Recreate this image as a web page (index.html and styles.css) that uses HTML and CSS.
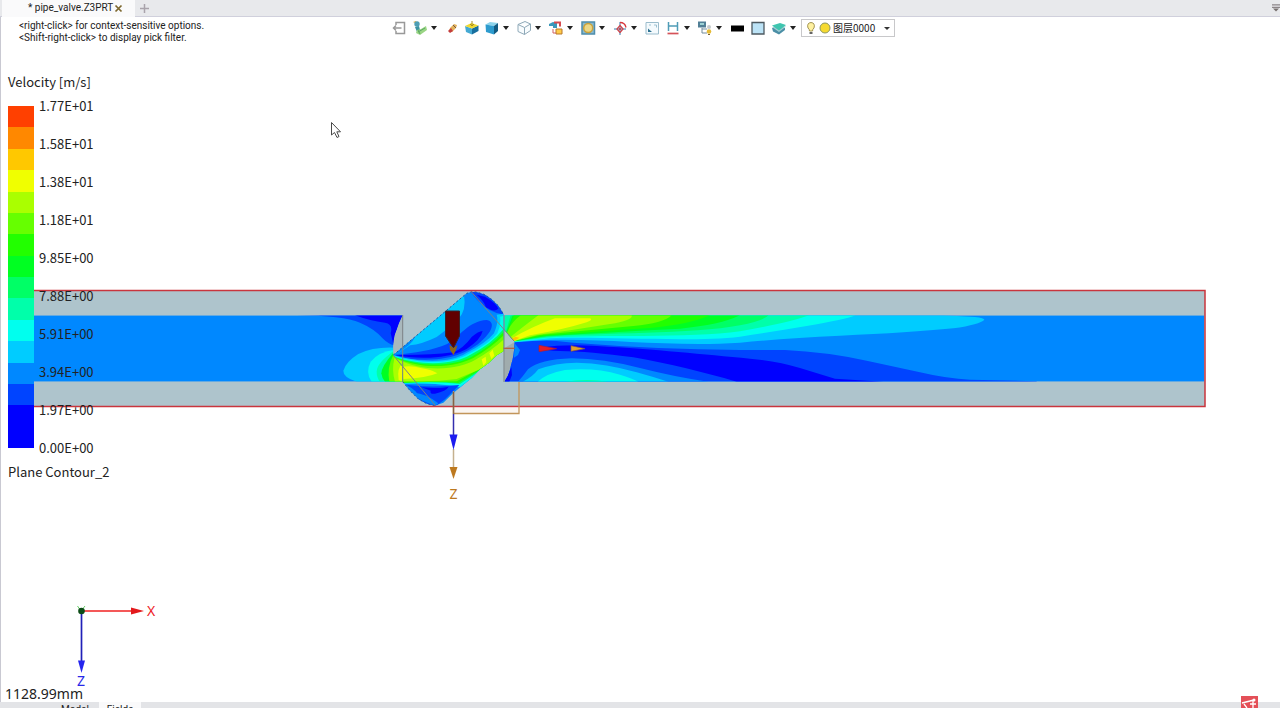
FILE: index.html
```html
<!DOCTYPE html>
<html lang="en">
<head>
<meta charset="utf-8">
<title>pipe_valve.Z3PRT</title>
<link rel="stylesheet" href="styles.css">
</head>
<body>
<header class="tabbar">
  <div class="tab">
    <span>* pipe_valve.Z3PRT</span>
    <button class="plain" aria-label="Close tab"><svg width="9" height="9" viewBox="0 0 9 9"><path d="M1.500 1.500l6 6M7.500 1.500l-6 6" stroke="#7d682f" stroke-width="1.700"/></svg></button>
  </div>
  <button class="plain new-tab" aria-label="New tab"><svg width="9" height="9" viewBox="0 0 9 9"><path d="M4.500 0v9M0 4.500h9" stroke="#a9a3ab" stroke-width="1.500"/></svg></button>
  <button class="plain tab-list" aria-label="Tab list"><svg width="8" height="8" viewBox="0 0 8 8"><path d="M0 .8h8M0 3.300h8" stroke="#8b8588" stroke-width="1.300"/><path d="M1 4.500h6l-3 3z" fill="#77706f"/></svg></button>
</header>

<main class="viewport">
  <svg class="scene" viewBox="0 17 1280 685" aria-label="Velocity contour on the valve section plane">
    <defs>
      <clipPath id="left"><path d="M-888 106H218Q207 128 200 150Q188 175 190 225L218 262V305H-888Z"/></clipPath>
      <clipPath id="ball"><path d="M190 225L345 95L410 40L425 35L440 36L465 44L485 58L505 77L521 103V213L500 226L475 250L450 268L425 294L400 314L370 339L340 368L315 377L290 371L265 357L240 332L218 305V258Z"/></clipPath>
      <clipPath id="right"><path d="M43 106H2142V305H43Q58 285 63 255Q72 230 74 186L43 149Z"/></clipPath>
    </defs>
    <rect x="34" y="291" width="1171" height="116" fill="#aec4cc"/>
    <g transform="translate(330 280) scale(.33333)">
      <g clip-path="url(#left)">
        <path fill="#0088ff" d="M-888 106H218V305H-888Z"/>
        <path fill="#0044ff" d="M-100 106Q40 107 90 128Q135 147 160 177Q175 192 192 196L225 106Z"/>
        <path fill="#0000ff" d="M75 106Q120 123 165 128Q190 132 182 160L190 192L225 106Z"/>
        <path fill="#00ccff" d="M195 203Q130 200 85 222Q48 245 40 272Q39 292 80 305H218V225Z"/>
        <path fill="#00ffee" d="M195 209Q145 215 122 245Q105 278 125 305H218V225Z"/>
        <path fill="#00ffaa" d="M190 214Q140 250 140 275Q140 293 150 305H218V225Z"/>
        <path fill="#00ff22" d="M190 218Q154 260 154 280Q156 296 165 305H218V225Z"/>
        <path fill="#66ff00" d="M190 225Q170 262 178 305H218V225Z"/>
        <path fill="#aaff00" d="M194 232Q184 270 195 305H218V235Z"/>
        <path fill="#f0ff00" d="M218 250Q200 265 206 300L218 305Z"/>
      </g>
      <path fill="#a9b8bc" d="M218 106Q207 128 200 150Q188 175 190 222L218 200Z"/>
      <g clip-path="url(#ball)">
        <path fill="#0088ff" d="M180 30H530V380H180Z"/>
        <path fill="#00ccff" d="M190 225L345 90L402 45Q410 90 385 118Q350 150 320 171Q275 193 240 196L205 220Z"/>
        <path fill="#0088ff" d="M190 225L258 166Q250 184 236 196L205 220Z"/>
        <path fill="#0044ff" d="M190 225Q290 218 350 193C390 170 415 123 470 120Q495 125 480 154C450 200 390 232 320 238Q240 243 190 225Z"/>
        <path fill="#0000ff" d="M198 225Q300 226 370 217Q400 205 425 171Q445 153 458 153Q453 178 410 207Q370 230 300 233Q240 235 198 225Z"/>
        <path fill="#0044ff" d="M422 35L470 40L530 105L500 99Q460 88 422 35Z"/>
        <path fill="#0000ff" d="M440 44L465 50Q500 70 505 86Q492 98 468 82Q463 64 440 44Z"/>
        <path fill="#00ccff" d="M190 225C290 254 370 244 408 220Q470 188 492 160Q507 125 500 104L530 100V225L400 325Q330 306 218 312Z"/>
        <path fill="#00ffee" d="M190 227C290 259 375 246 415 222Q480 190 502 160Q514 135 510 110L530 105V220L390 320Q320 307 218 310Z"/>
        <path fill="#00ff66" d="M190 229C290 264 380 249 420 225Q490 190 530 135V220L390 312Q320 303 218 309Z"/>
        <path fill="#22ff00" d="M190 230C290 269 385 253 425 230Q490 195 530 145V222L385 309Q320 302 218 309Z"/>
        <path fill="#66ff00" d="M190 231C290 276 385 257 430 234Q490 200 530 157V222L380 304Q310 305 218 306Z"/>
        <path fill="#aaff00" d="M200 237C290 282 390 266 435 240Q490 208 530 170V220L445 270L380 297Q300 308 218 302Z"/>
        <path fill="#f0ff00" d="M214 262Q240 255 275 265Q302 268 322 280Q290 294 220 297ZM455 238l12 -8 2 17 -9 10zM478 220l10-11 5 18-9 10z"/>
        <path fill="#0044ff" d="M228 314Q300 324 388 315L345 358L315 380L265 360Q275 339 228 314Z"/>
        <path fill="#0088ff" d="M252 338Q288 340 325 370L315 378L265 357Z"/>
        <path fill="#0000ff" d="M275 322Q330 327 356 320Q349 333 315 341Q298 343 302 332Z"/>
      </g>
      <path d="M190 225L345 95L410 40L425 35L440 36L465 44L485 58L505 77L521 103M218 305L240 332L265 357L290 371L315 377" fill="none" stroke="#285c9c" stroke-width="3" stroke-dasharray="6 7"/>
    </g>
    <g transform="translate(490 280) scale(.33333)">
      <path fill="#a0acad" d="M43 205L74 186Q73 240 62 256Q57 285 43 305Z"/>
      <g clip-path="url(#right)">
        <path fill="#0088ff" d="M43 106H2142V305H43Z"/>
        <path fill="#0044ff" d="M72 187Q150 176 250 188Q500 208 750 210H885Q1010 216 1130 242L1290 277Q1370 296 1440 299L1640 304V305H43V240Z"/>
        <path fill="#0000ff" d="M155 203Q220 192 320 198C500 208 640 223 780 236Q860 243 930 264L1035 296L1180 305H740C640 276 540 252 430 232Q300 214 210 213Q165 212 155 203Z"/>
        <path fill="#0088ff" d="M84 305Q100 288 114 268Q150 238 245 235Q340 236 450 264Q560 292 655 305Z"/>
        <path fill="#00ccff" d="M98 305Q126 293 145 268Q195 249 260 248Q350 250 440 277Q490 291 535 305Z"/>
        <path fill="#00ffee" d="M143 305Q170 280 225 270Q315 262 390 284Q425 294 445 305Z"/>
        <path fill="#00ffaa" d="M225 305Q290 295 355 305Z"/>
        <path fill="#0000ff" d="M43 305L64 262L66 285L58 305Z"/>
        <path fill="#0088ff" d="M74 190L90 210L84 225L72 233Z"/>
        <path fill="#00ccff" d="M43 106H1360L1455 111Q1483 114 1483 119Q1470 133 1390 145Q1260 158 1050 167Q880 175 750 188C550 202 350 174 170 180L72 187L43 180Z"/>
        <path fill="#00ffee" d="M43 106H1097Q1060 120 950 138Q850 155 750 170C600 188 330 168 180 175L72 186L43 180Z"/>
        <path fill="#00ffaa" d="M43 106H958Q900 127 750 154C600 176 320 163 170 173L72 185L43 180Z"/>
        <path fill="#00ff66" d="M62 106H836Q820 122 750 136C610 163 330 158 170 170L72 184L43 170Z"/>
        <path fill="#00ff22" d="M68 106H750Q690 135 570 146Q350 157 170 168L72 184L43 172Z"/>
        <path fill="#22ff00" d="M72 106H660Q600 133 480 144Q310 155 160 167L72 183L46 175Z"/>
        <path fill="#66ff00" d="M92 106H545Q520 130 430 138Q290 151 150 165L72 183L46 178Q52 136 92 106Z"/>
        <path fill="#aaff00" d="M145 106H425Q430 121 360 132Q250 150 140 165L72 183L50 181Q85 151 145 106Z"/>
        <path fill="#f0ff00" d="M64 176Q130 138 195 115H300Q311 119 290 127Q220 149 120 166L72 183Z"/>
        <path fill="#ffc800" d="M62 178l14-8 12 3-16 11z"/>
      </g>
      <path fill="#e81c24" stroke="#a02040" stroke-width="2" d="M147 196V215L200 206Z"/>
      <path fill="#e0a030" stroke="#806040" stroke-width="2" d="M243 197V214L285 206Z"/>
      <path d="M40 205H74" stroke="#b36345" stroke-width="4"/>
    </g>
    <path d="M34 290.500H1205V406.500H34" fill="none" stroke="#c9353d" stroke-width="1.500"/>
    <path d="M402.700 315V382M504 315V382M393.500 355.500L435 405M471.500 292L514 341" fill="none" stroke="#7c8286"/>
    <path d="M454 408H519V414H454Z" fill="#faf5f1"/>
    <path d="M519 382V413.500H453.500V391" fill="none" stroke="#c2955a" stroke-width="1.300"/>
    <path d="M453.500 392V414" stroke="#866246" stroke-width="1.500"/>
    <path d="M453.500 414V436" stroke="#342fae" stroke-width="1.500"/>
    <path d="M453.500 449V468" stroke="#c5b18f" stroke-width="1.500"/>
    <path d="M449.500 434.500H457.500L453.500 450Z" fill="#1d1cf0"/>
    <path d="M449.500 467H457.500L453.500 479Z" fill="#bd791f"/>
    <path d="M445.500 311H459.500V336L453.500 348L445.500 336Z" fill="#610000" stroke="#38252b"/>
    <path d="M449.500 345L453.500 348L457.500 345L456 350L453.500 355L450 350Z" fill="#8d671c"/>
    <text class="axis" x="453.500" y="499" fill="#bd791f">Z</text>

    <path d="M81.500 611H132" stroke="#f02020" stroke-width="1.700"/>
    <path d="M131 607.500L144 611L131 614.500Z" fill="#e3191c"/>
    <path d="M81.500 611V662" stroke="#2020b8" stroke-width="1.700"/>
    <path d="M78 660.500H85L81.500 673Z" fill="#2424ee"/>
    <path d="M77.500 606L81 611L85 606" fill="none" stroke="#66cf66"/>
    <circle cx="81.500" cy="611" r="3.300" fill="#0b4c16"/>
    <text class="axis" x="151" y="616" fill="#ee2228">X</text>
    <text class="axis" x="81" y="686" fill="#2828e8">Z</text>
    <path d="M331.500 122.500V135L334.500 132.500L337 137.500L339 136.500L336.800 131.800H340.500Z" fill="#fff" stroke="#4a4a4a"/>
  </svg>

  <div class="topline">
    <p class="hint">&lt;right-click&gt; for context-sensitive options.<br>&lt;Shift-right-click&gt; to display pick filter.</p>
    <div class="toolbar">
      <div class="tools">
        <button class="tool" aria-label="Exit"><svg viewBox="0 0 16 16"><path d="M5 5V2.500h8.500v11H5V11M10.500 8H2.500M5 5.500L2.500 8L5 10.500" fill="none" stroke="#999" stroke-width="1.500"/></svg></button>
        <button class="tool menu" aria-label="Datum"><svg viewBox="0 0 16 16"><path d="M1 2l3-1 1 3z" fill="#e0b04a"/><circle cx="5" cy="4" r="2.700" fill="#4f9fb5"/><path d="M3 7l4-1 1 4-3 2z" fill="#3c93a2"/><path d="M5 10l4-1 5-3 1 4-7 5-4-2z" fill="#9ad584"/><path d="M6 12l7-4M8 14l-2-4" fill="none" stroke="#5aa763"/></svg></button>
        <button class="tool slim" aria-label="Erase"><svg viewBox="0 0 16 16"><path d="M6 8l4-4 3 1-1 3-4 4-3-1z" fill="#e3b25b"/><path d="M4 11l3-3 2 3-3 2z" fill="#c43d3d"/><path d="M9 5l3 3" stroke="#725846"/></svg></button>
        <button class="tool slim" aria-label="Block"><svg viewBox="0 0 16 16"><path d="M1 6l7 2.500V14.500L2 12z" fill="#44a9d3"/><path d="M8 8.500l6.500-3V11L8 14.500z" fill="#186f9e"/><path d="M1 6l6.500-3 7 2.500L8 8.500z" fill="#efd831"/><path d="M8 1v5M6 4l2 2 2-2" stroke="#aa8d22" fill="none"/></svg></button>
        <button class="tool menu" aria-label="Shaded"><svg viewBox="0 0 16 16"><path d="M1.500 4.500L6 2l8 1-4 3z" fill="#8dd4ec"/><path d="M1.500 4.500L10 6v8.500L2 12z" fill="#2d9bce"/><path d="M10 6l4-3v8l-4 3.500z" fill="#125b82"/></svg></button>
        <button class="tool menu" aria-label="Wireframe"><svg viewBox="0 0 16 16"><path d="M9 1.500l5.500 2.500v6.500l-6 4L2 11.500V4.500zM2 4.500l6.500 3 6-3.500M8.500 7.500v7" fill="#f8fcfe" stroke="#8fa9b8"/></svg></button>
        <button class="tool menu" aria-label="Align view"><svg viewBox="0 0 16 16"><path d="M1 4l4-2 4 1v5H5v-2H1z" fill="#3a98bb"/><path d="M6 2.500h6v4" fill="none" stroke="#d64b50" stroke-width="2"/><path d="M8 9h6v5H8z" fill="#ffcc4a" stroke="#b97929"/><path d="M5 9v4h3" fill="none" stroke="#d15e5e"/></svg></button>
        <button class="tool menu" aria-label="Zoom all"><svg viewBox="0 0 16 16"><path d="M2 2h12.500v12H2z" fill="#86bad1" stroke="#4f8dab" stroke-width="1.500"/><circle cx="8.200" cy="8" r="4.500" fill="#ecd886" stroke="#c9a13c" stroke-width="1.500"/></svg></button>
        <button class="tool menu" aria-label="Rotate centre"><svg viewBox="0 0 16 16"><path d="M8 2v13M2 9h12" stroke="#347cae"/><path d="M8 5.500L11 9L8 12.500L5 9Z" fill="none" stroke="#cf444b" stroke-width="1.300"/><path d="M8 2.500q5 0 6 5M7 9h2" fill="none" stroke="#d9383e" stroke-width="1.300"/></svg></button>
        <button class="tool" aria-label="Window view"><svg viewBox="0 0 16 16"><path d="M2 2.500h12.500v11.500H2z" fill="#f4fafd" stroke="#9bbccc"/><path d="M4 8.500l4 3.500H4z" fill="#2d7292"/><path d="M5 5h2M10 5h2.500v2.500" fill="none" stroke="#9cc0d0"/></svg></button>
        <button class="tool menu" aria-label="Section"><svg viewBox="0 0 16 16"><path d="M3.500 2v9M12.500 2v9M3.500 6h9" fill="none" stroke="#4f9cb7" stroke-width="1.500"/><path d="M2.500 13.500h11" stroke="#d55359" stroke-width="1.700"/></svg></button>
        <button class="tool menu" aria-label="Display manager"><svg viewBox="0 0 16 16"><path d="M1 1.500h8v6H1z" fill="#517f96"/><path d="M3 3h4v2H3z" fill="#9bd1d4"/><path d="M5 8v5h5M5 9h5" fill="none" stroke="#738b9b"/><circle cx="12" cy="7" r="2" fill="#c5c9cb"/><circle cx="12" cy="11.500" r="2.300" fill="#e5bb37"/><path d="M11 14.500h2" stroke="#776034"/></svg></button>
        <button class="tool" aria-label="Line colour"><svg viewBox="0 0 16 16"><path d="M2 5.500h13v6H2z" fill="#000"/></svg></button>
        <button class="tool" aria-label="Face colour"><svg viewBox="0 0 16 16"><path d="M2 2.500h12v11.500H2z" fill="#bce3f6" stroke="#4d5960" stroke-width="1.300"/></svg></button>
        <button class="tool menu" aria-label="Layers"><svg viewBox="0 0 16 16"><path d="M1 8l7-1 6 1v2l-6 4.500-6-3z" fill="#4b8fa6"/><path d="M1 7l7-1 7 .5-7 5.500z" fill="#a5cdd4"/><path d="M1 5.500L9 3l6 2-7 5.500z" fill="#3fc5af"/></svg></button>
      </div>
      <label class="layer">
        <svg width="28" height="16" viewBox="0 0 28 16"><path d="M4.500 11Q4.500 9 3 8Q1.500 3 6 2.500Q10.500 3 9 8Q7.500 9 7.500 11z" fill="#fff1a0" stroke="#a29452"/><path d="M4.500 13h3" stroke="#656565" stroke-width="2"/><circle cx="20" cy="8" r="5" fill="#f6da31" stroke="#8c965f"/></svg>
        <select aria-label="Layer"><option>图层0000</option></select>
      </label>
    </div>
  </div>

  <section class="legend" aria-label="Velocity legend">
    <h2>Velocity [m/s]</h2>
    <div class="scale">
      <div class="bands">
        <i class="b1"></i><i class="b2"></i><i class="b3"></i><i class="b4"></i><i class="b5"></i><i class="b6"></i><i class="b7"></i><i class="b8"></i><i class="b9"></i><i class="b10"></i><i class="b11"></i><i class="b12"></i><i class="b13"></i><i class="b14"></i><i class="b15"></i><i class="b15"></i>
      </div>
      <ul>
        <li>1.77E+01</li><li>1.58E+01</li><li>1.38E+01</li><li>1.18E+01</li><li>9.85E+00</li><li>7.88E+00</li><li>5.91E+00</li><li>3.94E+00</li><li>1.97E+00</li><li>0.00E+00</li>
      </ul>
    </div>
    <h2>Plane Contour_2</h2>
  </section>
  <p class="measure">1128.99mm</p>
</main>

<footer class="bottom">
  <button class="plain page">Model</button>
  <button class="plain page active">Fields</button>
</footer>
<svg class="badge" width="17" height="12" viewBox="0 0 17 12" aria-hidden="true"><path d="M0 0h17v12H0z" fill="#e45058"/><path d="M1 7l12-3M3 8l3 4M9 8h6M12 5v7" stroke="#fff" stroke-width="1.300"/><circle cx="13" cy="4" r="1.500" fill="#fff"/></svg>
</body>
</html>
```
FILE: styles.css
```css
* { box-sizing: border-box; }
body {
  margin: 0;
  height: 100vh;
  display: flex;
  flex-direction: column;
  overflow: hidden;
  background: #fff;
  color: #222;
  font-family: Roboto, "Noto Sans CJK SC", sans-serif;
  font-size: 10px;
}
p, h2, ul { margin: 0; padding: 0; }
svg { display: block; }
.plain { border: 0; padding: 0; background: none; font: inherit; color: inherit; }

.tabbar {
  display: flex;
  align-items: center;
  height: 17px;
  flex: none;
  background: #e8e9ec;
  border-bottom: 1px solid #d0d0dc;
}
.tab {
  display: flex;
  align-items: center;
  justify-content: space-between;
  width: 133px;
  height: 17px;
  margin-left: 2px;
  padding: 0 12px 0 26px;
  background: #fafafb;
  line-height: 16px;
  white-space: nowrap;
}
.new-tab { margin-left: 5px; }
.tab-list { margin-left: auto; }

.viewport {
  position: relative;
  flex: 1;
  min-height: 0;
  display: flex;
  flex-direction: column;
  border-left: 1px solid #c9c9d2;
}
.scene { position: absolute; top: 0; left: -1px; width: 100vw; }
.axis {
  font-family: "Noto Sans", sans-serif;
  font-size: 14px;
  text-anchor: middle;
}

.topline { position: relative; display: flex; height: 57px; }
.hint { width: 390px; padding: 3px 0 0 18px; line-height: 12px; }
.toolbar { display: flex; align-items: flex-start; gap: 3px; padding-top: 2px; }
.tools { display: flex; gap: 5px; padding-top: 1px; }
.tool {
  display: flex;
  align-items: center;
  gap: 3px;
  width: 16px;
  height: 16px;
  border: 0;
  padding: 0;
  background: none;
}
.tool svg { width: 16px; height: 16px; flex: none; }
.slim { width: 15px; }
.menu { width: 27px; }
.menu::after {
  content: "";
  border: 3px solid transparent;
  border-top: 4px solid #222;
  border-bottom: 0;
}
.layer {
  position: relative;
  display: flex;
  align-items: center;
  width: 94px;
  height: 18px;
  padding-left: 3px;
  border: 1px solid #c8c8ca;
}
.layer select {
  flex: 1;
  min-width: 0;
  border: 0;
  padding: 0;
  appearance: none;
  background: none;
  color: #222;
  font: 10px/16px "Noto Sans CJK SC", sans-serif;
}
.layer::after {
  content: "";
  margin-right: 4px;
  border: 3px solid transparent;
  border-top: 3px solid #333;
  border-bottom: 0;
}

.legend {
  position: relative;
  padding: 3px 0 0 7px;
  font-family: "Noto Sans CJK SC", sans-serif;
  font-size: 13px;
}
.legend h2 { font-size: 13px; font-weight: 400; line-height: 10px; }
.scale { display: flex; gap: 5px; }
.bands { display: flex; flex-direction: column; width: 26px; margin: 19px 0; }
.bands i { flex: 1; }
.legend ul { list-style: none; line-height: 38px; }
.b1 { background: #ff4000; }
.b2 { background: #ff8800; }
.b3 { background: #ffc800; }
.b4 { background: #f0ff00; }
.b5 { background: #aaff00; }
.b6 { background: #66ff00; }
.b7 { background: #22ff00; }
.b8 { background: #00ff22; }
.b9 { background: #00ff66; }
.b10 { background: #00ffaa; }
.b11 { background: #00ffee; }
.b12 { background: #00ccff; }
.b13 { background: #0088ff; }
.b14 { background: #0044ff; }
.b15 { background: #0000ff; }

.measure {
  position: relative;
  margin-top: auto;
  padding-left: 4px;
  font-family: "Noto Sans", sans-serif;
  font-size: 14px;
  line-height: 16px;
}

.bottom {
  display: flex;
  align-items: flex-start;
  flex: none;
  height: 6px;
  padding-left: 51px;
  overflow: hidden;
  background: #e3e4e7;
}
.page { padding: 0 10px; height: 16px; line-height: 16px; }
.active { background: #fafafb; padding: 0 8px; }
.badge { position: absolute; right: 22px; bottom: 0; }
```
